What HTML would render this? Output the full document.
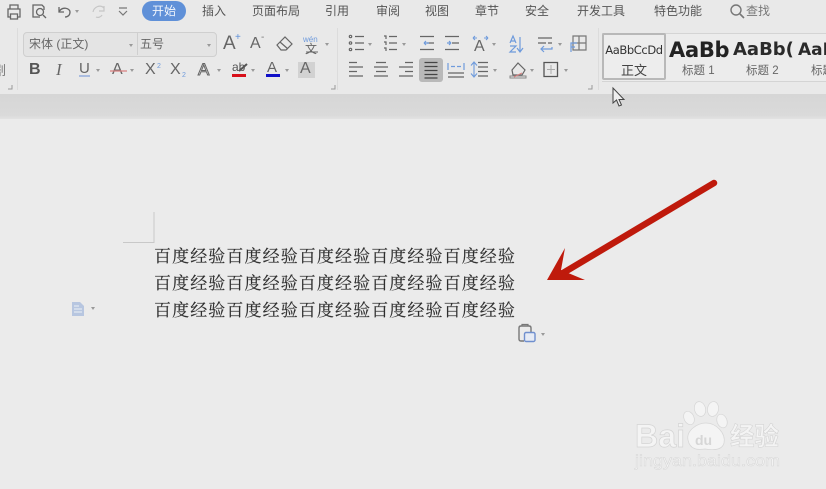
<!DOCTYPE html>
<html><head><meta charset="utf-8">
<style>
html,body{margin:0;padding:0}
html{background:#ebebeb}
body{width:826px;height:489px;overflow:hidden;background:#ebebeb;position:relative;font-family:"Liberation Sans","Noto Sans CJK SC",sans-serif;color:#555;filter:blur(.35px)}
.a{position:absolute;white-space:nowrap}
.tab{position:absolute;top:3px;font-size:12px;line-height:17px;color:#555;white-space:nowrap}
.dn{position:absolute;width:0;height:0;border-left:2.500px solid transparent;border-right:2.500px solid transparent;border-top:3px solid #999}
.t{position:absolute;left:154px;font-family:"Noto Serif CJK SC","Liberation Serif",serif;font-size:17px;letter-spacing:1.100px;line-height:20px;color:#2e2e2e;white-space:nowrap;-webkit-text-stroke:.15px #2e2e2e}
svg{position:absolute;left:0;top:0}
</style></head><body>
<div class="a" style="left:0;top:0;width:826px;height:94px;background:#e9e9e9"></div>
<div class="a" style="left:0;top:94px;width:826px;height:25px;background:linear-gradient(#d6d6d6,#dadada 85%,#e2e2e2)"></div>

<div class="a" style="left:142px;top:1px;width:44px;height:20px;border-radius:10px;background:#5f90d8;color:#f2f6fc;font-size:12px;line-height:20px;text-align:center">开始</div>
<div class="tab" style="left:202px">插入</div>
<div class="tab" style="left:252px">页面布局</div>
<div class="tab" style="left:325px">引用</div>
<div class="tab" style="left:376px">审阅</div>
<div class="tab" style="left:425px">视图</div>
<div class="tab" style="left:475px">章节</div>
<div class="tab" style="left:525px">安全</div>
<div class="tab" style="left:577px">开发工具</div>
<div class="tab" style="left:654px">特色功能</div>
<div class="tab" style="left:746px;color:#777">查找</div>

<!-- font boxes -->
<div class="a" style="left:23px;top:32px;width:192px;height:23px;border:1px solid #cfcfcf;border-radius:4px;background:#e4e4e4"></div>
<div class="a" style="left:137px;top:33px;width:1px;height:22px;background:#cfcfcf"></div>
<div class="a" style="left:29px;top:36px;font-size:12px;line-height:16px;color:#666">宋体 (正文)</div>
<div class="a" style="left:140px;top:36px;font-size:12px;line-height:16px;color:#666">五号</div>
<div class="a" style="left:-7px;top:63px;font-size:13px;line-height:16px;color:#777;width:14px;overflow:hidden">剧</div>

<!-- format row text -->
<div class="a" style="left:223px;top:33px;font-size:19px;line-height:22px;color:#666">A</div>
<div class="a" style="left:235px;top:33px;font-size:10px;line-height:10px;color:#5f90d8">+</div>
<div class="a" style="left:250px;top:34px;font-size:16px;line-height:20px;color:#666">A</div>
<div class="a" style="left:261px;top:33px;font-size:10px;line-height:9px;color:#777">-</div>
<div class="a" style="left:303px;top:36px;font-size:8px;line-height:8px;color:#6f9bdc">wén</div>
<div class="a" style="left:305px;top:43px;font-size:12px;line-height:12px;color:#666">文</div>
<div class="a" style="left:29px;top:61px;font-size:16px;line-height:18px;font-weight:bold;color:#555">B</div>
<div class="a" style="left:56px;top:61px;font-size:17px;line-height:18px;font-style:italic;font-family:'Liberation Serif',serif;color:#666">I</div>
<div class="a" style="left:79px;top:60px;font-size:15px;line-height:18px;color:#666">U</div>
<div class="a" style="left:112px;top:61px;font-size:16px;line-height:18px;color:#666">A</div>
<div class="a" style="left:145px;top:61px;font-size:16px;line-height:18px;color:#666">X</div>
<div class="a" style="left:157px;top:63px;font-size:7px;line-height:8px;color:#6f9bdc">2</div>
<div class="a" style="left:170px;top:61px;font-size:16px;line-height:18px;color:#666">X</div>
<div class="a" style="left:182px;top:72px;font-size:7px;line-height:8px;color:#6f9bdc">2</div>
<div class="a" style="left:198px;top:60px;font-size:17px;line-height:19px;color:#e9e9e9;-webkit-text-stroke:1px #666">A</div>
<div class="a" style="left:232px;top:60px;font-size:12px;line-height:14px;color:#555">ab</div>
<div class="a" style="left:232px;top:74px;width:14px;height:3px;background:#d8101a"></div>
<div class="a" style="left:267px;top:59px;font-size:15px;line-height:17px;color:#666">A</div>
<div class="a" style="left:266px;top:74px;width:14px;height:3px;background:#1010c8"></div>
<div class="a" style="left:298px;top:62px;width:17px;height:16px;background:#d2d2d2"></div>
<div class="a" style="left:300px;top:60px;font-size:16px;line-height:18px;color:#666">A</div>
<div class="a" style="left:474px;top:38px;font-size:16px;line-height:18px;color:#666">A</div>

<!-- para highlight -->
<div class="a" style="left:419px;top:58px;width:24px;height:24px;border-radius:3px;background:#b9b9b9"></div>

<!-- style gallery -->
<div class="a" style="left:602px;top:33px;width:224px;height:47px;background:#ececec;border-top:1px solid #d4d4d4;border-bottom:1px solid #d4d4d4"></div>
<div class="a" style="left:602px;top:33px;width:60px;height:43px;border:2px solid #b8b8b8;border-radius:2px;background:#ededed"></div>
<div class="a" style="left:603px;top:43px;width:62px;text-align:center;font-size:11.500px;line-height:14px;color:#333;font-family:'DejaVu Sans',sans-serif;letter-spacing:-.4px">AaBbCcDd</div>
<div class="a" style="left:603px;top:63px;width:62px;text-align:center;font-size:13px;line-height:16px;color:#444">正文</div>
<div class="a" style="left:669px;top:36px;width:66px;height:26px;overflow:hidden;font-family:'DejaVu Sans',sans-serif;font-weight:bold;font-size:21px;line-height:28px;color:#222;letter-spacing:-.3px">AaBb</div>
<div class="a" style="left:682px;top:64px;font-size:11.500px;line-height:15px;color:#666">标题 1</div>
<div class="a" style="left:733px;top:38px;width:63px;height:24px;overflow:hidden;font-family:'DejaVu Sans',sans-serif;font-weight:bold;font-size:18px;line-height:24px;color:#2a2a2a">AaBb(</div>
<div class="a" style="left:746px;top:64px;font-size:11.500px;line-height:15px;color:#666">标题 2</div>
<div class="a" style="left:798px;top:38px;width:28px;height:24px;overflow:hidden;font-family:'DejaVu Sans',sans-serif;font-weight:bold;font-size:17px;line-height:24px;color:#2a2a2a">AaB</div>
<div class="a" style="left:811px;top:64px;font-size:11.500px;line-height:15px;color:#666;width:15px;overflow:hidden">标题</div>

<!-- dropdown arrows -->
<div class="dn" style="left:75px;top:10px"></div>
<div class="dn" style="left:129px;top:44px"></div>
<div class="dn" style="left:207px;top:44px"></div>
<div class="dn" style="left:325px;top:43px"></div>
<div class="dn" style="left:96px;top:69px"></div>
<div class="dn" style="left:130px;top:69px"></div>
<div class="dn" style="left:217px;top:69px"></div>
<div class="dn" style="left:251px;top:69px"></div>
<div class="dn" style="left:285px;top:69px"></div>
<div class="dn" style="left:368px;top:43px"></div>
<div class="dn" style="left:402px;top:43px"></div>
<div class="dn" style="left:492px;top:43px"></div>
<div class="dn" style="left:558px;top:43px"></div>
<div class="dn" style="left:493px;top:69px"></div>
<div class="dn" style="left:530px;top:69px"></div>
<div class="dn" style="left:564px;top:69px"></div>
<div class="dn" style="left:91px;top:307px"></div>
<div class="dn" style="left:541px;top:333px"></div>

<svg width="826" height="489" viewBox="0 0 826 489" fill="none">
<!-- group separators -->
<path d="M17.500 28V90M337.500 28V90M598.500 28V90" stroke="#dcdcdc"/>
<path d="M8 89H12V85M331 89H335V85M588 89H592V85" stroke="#999"/>
<!-- QAT -->
<g stroke="#666" stroke-width="1.300">
<path d="M10 9V5H18V9M11 17H8V9H20V17H17M10.500 14H17.500V19H10.500Z"/>
<path d="M40 17H33V5H42L44 7V10"/><circle cx="40" cy="12" r="3.500"/><path d="M43 15L46 18"/>
<path d="M59 7V12H64M59 12C62 6 70 8 70 12C70 15 68 17 65 17"/>
</g>
<path d="M104 8C100 4 94 7 93 12M104 6V11H99M96 17C98 18 101 17 102 15" stroke="#c6c6c6" stroke-width="1.200"/>
<path d="M119 8H127M119 11L123 15L127 11" stroke="#777" stroke-width="1.200"/>
<circle cx="736" cy="10" r="5" stroke="#777" stroke-width="1.400"/><path d="M740 14L744 18" stroke="#777" stroke-width="1.600"/>
<!-- eraser -->
<path d="M277 45L285 37L292 44L286 50H281ZM280 42L288 49" stroke="#666" stroke-width="1.200"/>
<path d="M306 52H318" stroke="#666"/>
<!-- underline etc -->
<path d="M79 76H90" stroke="#7f9fd8" stroke-width="1.200"/>
<path d="M110 71H127" stroke="#d98080" stroke-width="1.200"/>
<path d="M239 71L247 64" stroke="#555" stroke-width="2"/>
<!-- lists -->
<g stroke="#666" stroke-width="1.200">
<path d="M355 36.500H364M355 43H364M355 49.500H364"/>
<circle cx="350.500" cy="36.500" r="1.200"/><circle cx="350.500" cy="43" r="1.200"/><circle cx="350.500" cy="49.500" r="1.200"/>
<path d="M389 36.500H397M389 43H397M389 49.500H397M384 36H386V39M384 42H386V45M384 48H386V51"/>
<path d="M420 36.500H434M427 43H434M420 49.500H434M445 36.500H459M445 49.500H459M452 43H459"/>
<!-- align -->
<path d="M349 62.500H357M349 67H363M349 71.500H357M349 76H363"/>
<path d="M376 62.500H386M374 67H388M376 71.500H386M374 76H388"/>
<path d="M405 62.500H413M399 67H413M405 71.500H413M399 76H413"/>
</g>
<path d="M424.500 62.500H437.500M424.500 66.500H437.500M424.500 70.500H437.500M424.500 74.500H437.500M424.500 78H437.500" stroke="#444" stroke-width="1.300"/>
<path d="M448 73H464M448 77H464" stroke="#666" stroke-width="1.200"/>
<path d="M448 63V70M464 63V70M451 66.500H455M457 66.500H461" stroke="#6f9bdc" stroke-width="1.200"/>
<path d="M478 62.500H488M478 67H488M478 71.500H488M478 76H488" stroke="#666" stroke-width="1.200"/>
<path d="M474 63V76M471 65.500L474 62L477 65.500M471 73.500L474 77L477 73.500" stroke="#6f9bdc" stroke-width="1.100"/>
<path d="M429 43H424M424 43L426 41M424 43L426 45M447 43H451M451 43L449 41M451 43L449 45" stroke="#6f9bdc" stroke-width="1.200"/>
<path d="M473 38H477M473 38L475 36M473 38L475 40M488 38H484M488 38L486 36M488 38L486 40" stroke="#6f9bdc" stroke-width="1.100"/>
<!-- sort -->
<path d="M510 43L513 36L516 43M511 41H515M510 46H516L510 52H516" stroke="#6f9bdc" stroke-width="1.200"/>
<path d="M520 37V51M517 48L520 52L523 48" stroke="#6f9bdc" stroke-width="1.200"/>
<path d="M538 38H552M538 43H546M548 43H552" stroke="#666" stroke-width="1.200"/>
<path d="M552 47V49H541M544 46L541 49L544 52" stroke="#6f9bdc" stroke-width="1.200"/>
<path d="M573 36H586V50H573ZM579 36V50M573 43H586" stroke="#777" stroke-width="1.200"/>
<path d="M571 52V43H577M571 47H575" stroke="#6f9bdc" stroke-width="1.200"/>
<!-- shading -->
<path d="M512 70L518 63L525 70L522 75H513Z" stroke="#666" stroke-width="1.200"/>
<path d="M510 76H526V78H510Z" stroke="#888"/>
<path d="M514 77L522 73" stroke="#d98080"/>
<!-- borders -->
<path d="M544 62.500H557.500V76.500H544Z" stroke="#555" stroke-width="1.300"/>
<path d="M551 65V74M547 69.500H555" stroke="#aaa"/>
<!-- cursor -->
<path d="M613 88V103L616.500 100L619 106L621.500 105L619 99.500H624Z" fill="#eee" stroke="#444" stroke-width="1"/>
<!-- page margin corner -->
<path d="M154 212V242.500H123" stroke="#c8c8c8"/>
<!-- doc icon -->
<path d="M72 302H80L84 306V316H72Z" fill="#b7c6e0"/>
<path d="M74 306H79M74 309H82M74 312H82" stroke="#eef1f6"/>
<!-- paste icon -->
<path d="M524 341H521Q519 341 519 339V328Q519 326 521 326H529Q531 326 531 328V332" stroke="#777" stroke-width="1.400"/>
<path d="M522 326V324.500H528V326" stroke="#777" stroke-width="1.200"/>
<rect x="524.500" y="332.500" width="10.500" height="9" rx="1.500" fill="#e6ebf5" stroke="#6f8fce" stroke-width="1.400"/>
<!-- arrow -->
<path d="M714 183L558 276" stroke="#bf1a0c" stroke-width="6.500" stroke-linecap="round"/>
<path d="M547 280L565 248L561 270L585 280Z" fill="#bf1a0c"/>
<!-- watermark -->
<g fill="#f4f4f4" stroke="#d6d6d6" stroke-width=".7">
<ellipse cx="700" cy="409" rx="5.500" ry="7.500" transform="rotate(-15 700 409)"/>
<ellipse cx="713" cy="409" rx="5.500" ry="7.500" transform="rotate(10 713 409)"/>
<ellipse cx="689" cy="418" rx="5" ry="7" transform="rotate(-25 689 418)"/>
<ellipse cx="722" cy="421" rx="5" ry="7" transform="rotate(-20 722 421)"/>
<path d="M688 440C686 430 698 423 706 423C716 423 726 433 724 443C722 451 711 450 705 449C698 450 690 450 688 440Z"/>
</g>
<text x="695" y="445" font-family="Liberation Sans" font-size="14" font-weight="bold" fill="#d6d6d6">du</text>
<text x="635" y="447" font-family="Liberation Sans" font-size="32" font-weight="bold" fill="#f4f4f4" stroke="#d4d4d4" stroke-width=".7" textLength="50" lengthAdjust="spacingAndGlyphs">Bai</text>
<text x="730" y="445" font-family="Noto Sans CJK SC" font-size="25" font-weight="bold" fill="#f4f4f4" stroke="#d4d4d4" stroke-width=".6" textLength="49" lengthAdjust="spacingAndGlyphs">经验</text>
<text x="635" y="466" font-family="Liberation Sans" font-size="16" fill="#f4f4f4" stroke="#d6d6d6" stroke-width=".5" textLength="145" lengthAdjust="spacingAndGlyphs">jingyan.baidu.com</text>
</svg>

<div class="t" style="top:245px">百度经验百度经验百度经验百度经验百度经验</div>
<div class="t" style="top:272px">百度经验百度经验百度经验百度经验百度经验</div>
<div class="t" style="top:299px">百度经验百度经验百度经验百度经验百度经验</div>
</body></html>
